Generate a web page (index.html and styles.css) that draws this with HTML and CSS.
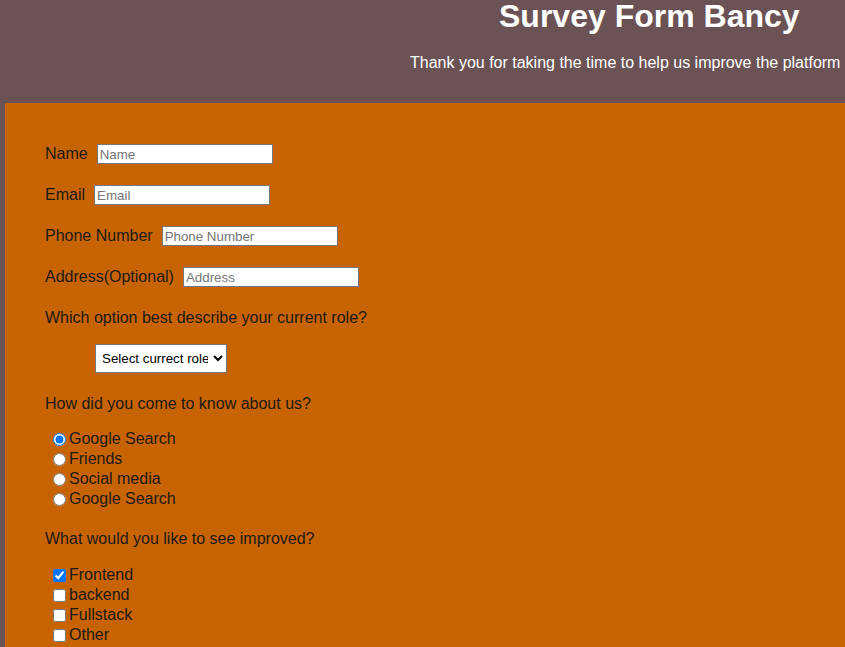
FILE: index.html
```html
<!DOCTYPE html>
<html>
<head>
<meta charset="utf-8">
<title>Survey Form</title>
<link rel="stylesheet" href="styles.css">
</head>
<body>
<header class="header">
  <h1 class="title">Survey Form Bancy</h1>
  <p class="subtitle">Thank you for taking the time to help us improve the platform</p>
</header>
<form class="form">
  <div class="row"><label class="label" for="name">Name</label><input class="field" id="name" type="text" placeholder="Name"></div>
  <div class="row"><label class="label" for="email">Email</label><input class="field" id="email" type="email" placeholder="Email"></div>
  <div class="row"><label class="label" for="phone">Phone Number</label><input class="field" id="phone" type="text" placeholder="Phone Number"></div>
  <div class="row"><label class="label" for="address">Address(Optional)</label><input class="field" id="address" type="text" placeholder="Address"></div>
  <div class="row question">Which option best describe your current role?</div>
  <div class="select-row">
    <select class="select">
      <option>Select currect role</option>
      <option>Student</option>
      <option>Full time job</option>
    </select>
  </div>
  <div class="row question">How did you come to know about us?</div>
  <div class="options radios">
    <label class="opt"><input class="radio" type="radio" name="src" checked>Google Search</label>
    <label class="opt"><input class="radio" type="radio" name="src">Friends</label>
    <label class="opt"><input class="radio" type="radio" name="src">Social media</label>
    <label class="opt"><input class="radio" type="radio" name="src">Google Search</label>
  </div>
  <div class="row question">What would you like to see improved?</div>
  <div class="options checks">
    <label class="opt"><input class="check" type="checkbox" checked>Frontend</label>
    <label class="opt"><input class="check" type="checkbox">backend</label>
    <label class="opt"><input class="check" type="checkbox">Fullstack</label>
    <label class="opt"><input class="check" type="checkbox">Other</label>
  </div>
</form>
</body>
</html>
```

FILE: styles.css
```css
html, body {
  margin: 0;
  padding: 0;
}
body {
  font-family: "Liberation Sans", Arial, sans-serif;
  font-size: 16px;
  color: #1c1a18;
  background: #6b5254;
  overflow: hidden;
}
.header {
  display: flow-root;
  background: #6b5254;
  color: #ffffff;
  height: 103px;
  padding-left: 410px;
  box-sizing: border-box;
}
.title {
  margin: -3px 0 0 0;
  padding-left: 89px;
  font-size: 32px;
  font-weight: bold;
  line-height: 38px;
}
.subtitle {
  margin: 19px 0 0 0;
  font-size: 16px;
  line-height: 18px;
  white-space: nowrap;
}
.form {
  background: #c76300;
  margin-left: 5px;
  padding: 41px 0 0 40px;
  height: 544px;
  box-sizing: border-box;
}
.row {
  display: flex;
  align-items: center;
  height: 20px;
  margin-bottom: 21px;
}
.label {
  margin-right: 9px;
}
.field {
  font-family: "Liberation Sans", Arial, sans-serif;
  font-size: 13.333px;
  width: 176px;
  height: 20px;
  box-sizing: border-box;
  border: 1px solid #767676;
  padding: 1px 2px;
  margin: 0;
  background: #fff;
}
.field::placeholder {
  color: #757575;
}
.select-row {
  padding-left: 50px;
  margin-top: -5px;
  margin-bottom: 21px;
}
.select {
  font-family: "Liberation Sans", Arial, sans-serif;
  font-size: 13.333px;
  height: 29px;
  width: 132px;
  padding: 0 2px;
  border: 1px solid #767676;
  border-radius: 0;
  background: #fff;
  color: #000;
}
.options {
  display: flex;
  flex-direction: column;
  padding-left: 3px;
}
.radios {
  margin-top: -6px;
  margin-bottom: 20px;
}
.checks {
  margin-top: -5px;
}
.opt {
  display: flex;
  align-items: center;
  height: 20px;
}
.radio, .check {
  width: 13px;
  height: 13px;
  margin: 0 3px 0 5px;
}
```
